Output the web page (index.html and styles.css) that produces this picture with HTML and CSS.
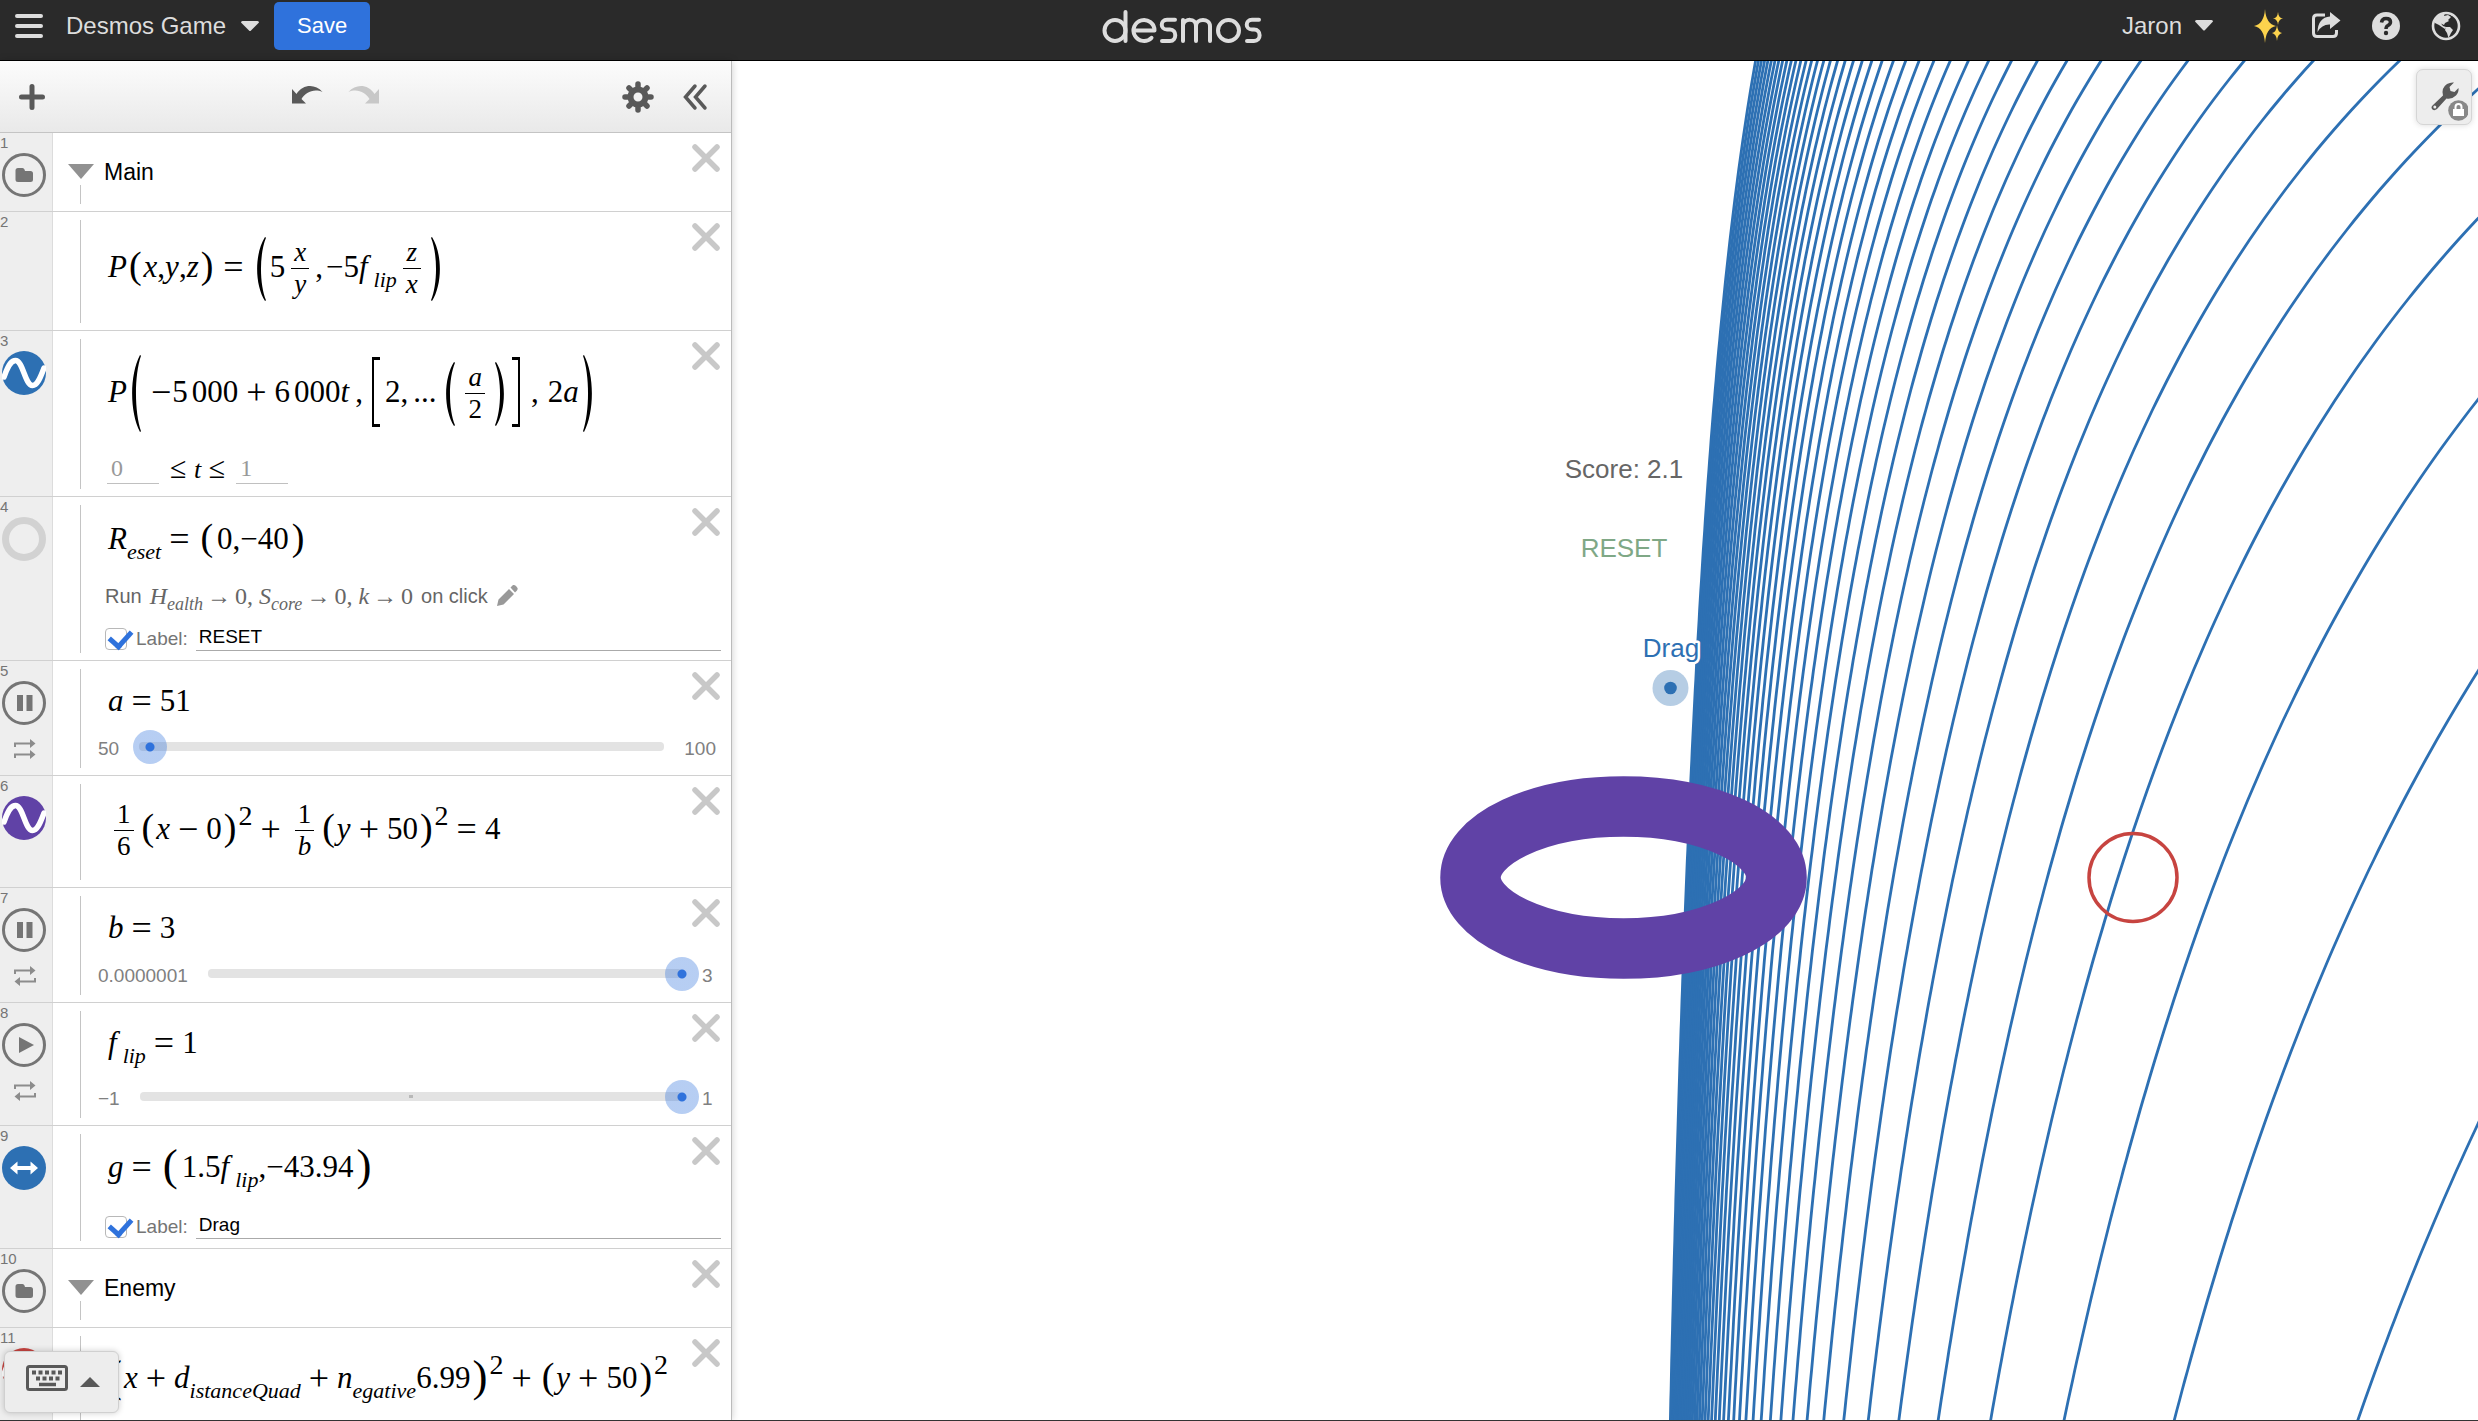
FILE: index.html
```html
<!DOCTYPE html>
<html lang="en">
<head>
<meta charset="utf-8">
<title>Desmos Game</title>
<link rel="stylesheet" href="styles.css">
</head>
<body>
<svg class="defs" aria-hidden="true">
  <symbol id="paren-open" viewBox="0 0 10 100" preserveAspectRatio="none"><path d="M9 0C-1.500 26-1.500 74 9 100L10 99C3.300 74 3.300 26 10 1Z"/></symbol>
  <symbol id="paren-close" viewBox="0 0 10 100" preserveAspectRatio="none"><path d="M1 0C11.500 26 11.500 74 1 100L0 99C6.700 74 6.700 26 0 1Z"/></symbol>
  <symbol id="close" viewBox="0 0 28 28"><path d="M3 3L25 25M25 3L3 25" stroke="currentColor" stroke-width="5.500" stroke-linecap="round"/></symbol>
  <symbol id="folder" viewBox="0 0 44 44"><circle cx="22" cy="22" r="20.500" fill="none" stroke="#757575" stroke-width="3"/><path d="M13.500 17.500q0-2.500 2.500-2.500h4.500q1.500 0 2 1.500l.5 1.500h5.500q2.500 0 2.500 2.500v6q0 2.500-2.500 2.500h-12.500q-2.500 0-2.500-2.500z" fill="#757575"/></symbol>
  <symbol id="pause" viewBox="0 0 44 44"><circle cx="22" cy="22" r="20.500" fill="none" stroke="#757575" stroke-width="3"/><path d="M15 14h6v16h-6zM24.500 14h6v16h-6z" fill="#757575"/></symbol>
  <symbol id="play" viewBox="0 0 44 44"><circle cx="22" cy="22" r="20.500" fill="none" stroke="#757575" stroke-width="3"/><path d="M17 14L32 22L17 30Z" fill="#757575"/></symbol>
  <symbol id="wave" viewBox="0 0 44 44"><circle cx="22" cy="22" r="22" fill="currentColor"/><path d="M2 26C7 12 10 9.500 13.500 9.500C21 9.500 23 34.500 30.500 34.500C35 34.500 38 28 42 17" fill="none" stroke="#fff" stroke-width="5.500" stroke-linecap="round"/></symbol>
  <symbol id="loop" viewBox="0 0 22 22"><path d="M1 9V5.500H17M21 13V16.500H5" fill="none" stroke="#8c8c8c" stroke-width="2"/><path d="M16 1l5.500 4.500L16 10zM6 12L.5 16.500L6 21z" fill="#8c8c8c"/></symbol>
  <symbol id="forward" viewBox="0 0 22 22"><path d="M1 9V5.500H17M1 20V16.500H17" fill="none" stroke="#8c8c8c" stroke-width="2"/><path d="M16 1l5.500 4.500L16 10zM16 12l5.500 4.500L16 21z" fill="#8c8c8c"/></symbol>
  <symbol id="undo" viewBox="0 0 32 20"><path d="M1 4V18.500H15L10.500 14C14 7.500 23 3 31.500 7C24-1.500 12-1 5.500 9Z" fill="currentColor"/></symbol>
</svg>

<header class="topbar">
  <button class="bare" aria-label="Open graph menu"><svg width="28" height="26"><path d="M2 3h24M2 13h24M2 23h24" stroke="#ddd" stroke-width="4" stroke-linecap="round"/></svg></button>
  <button class="bare title">Desmos Game<svg width="18" height="10"><path d="M0 1.500Q0 0 1.500 0h15Q18 0 18 1.500L10 9.500Q9 10.500 8 9.500Z" fill="#ddd"/></svg></button>
  <button class="save">Save</button>
  <a class="logo" href="#" aria-label="desmos"><svg width="164" height="36" viewBox="0 0 164 36" fill="none" stroke="#ddd" stroke-width="4" stroke-linecap="round" stroke-linejoin="round">
    <circle cx="15" cy="22.500" r="10.500"/><path d="M25.500 4V33M33.500 22.500H54.500M54.500 22.500A10.500 10.500 0 1 0 51.500 29.800M75 11.800H67C60 11.800 60 21.500 67 21.500H70C77 21.500 77 33 70 33H62M83 33V12M83 17C84.500 10 96 10 96 18V33M96 18C96 10 110 10 110 18V33M159 11.800H152C145 11.800 145 21.500 152 21.500H154C161.500 21.500 161.500 33 154 33H147"/><circle cx="128.500" cy="22.500" r="10.500"/>
  </svg></a>
  <nav class="account">
    <button class="bare user">Jaron<svg width="18" height="11"><path d="M0 1.500Q0 0 1.500 0h15Q18 0 18 1.500L10 10Q9 11 8 10Z" fill="#ddd"/></svg></button>
    <button class="bare" aria-label="What's new"><svg width="28" height="34" viewBox="0 0 28 34" fill="#fcd34d"><path d="M12 0Q13 15 23 17Q13 19 12 34Q11 19 1 17Q11 15 12 0Z"/><path d="M25 3Q25.500 9 30 9.500Q25.500 10 25 16Q24.500 10 20 9.500Q24.500 9 25 3ZM24 16Q24.500 23 29 24Q24.500 25 24 32Q23.500 25 19 24Q23.500 23 24 16Z"/></svg></button>
    <button class="bare" aria-label="Share"><svg width="30" height="28" viewBox="0 0 30 28"><path d="M14 3H6Q2.500 3 2.500 6.500V21Q2.500 24.500 6 24.500H22Q25.500 24.500 25.500 21V18" fill="none" stroke="#ddd" stroke-width="3"/><path d="M19 0L29.500 8.500L19 17V12.500Q11 12 6.500 20Q7 5.500 19 4.500Z" fill="#ddd"/></svg></button>
    <button class="bare" aria-label="Help"><svg width="30" height="30" viewBox="0 0 30 30"><circle cx="15" cy="15" r="14" fill="#ddd"/><path d="M10.500 11.500Q11 7.500 15 7.500Q19.500 7.500 19.500 11Q19.500 13 17 14.500Q15 15.500 15 18" fill="none" stroke="#2a2a2a" stroke-width="3.500"/><circle cx="15" cy="22" r="2.200" fill="#2a2a2a"/></svg></button>
    <button class="bare" aria-label="Language"><svg width="30" height="30" viewBox="0 0 30 30"><circle cx="15" cy="15" r="13" fill="none" stroke="#ddd" stroke-width="2.600"/><path d="M4 9L9 3L14 2L13 5L17 4L20 6L17 9L18 10L14 12L13 14L10 12.500L12 15L15 16L14 18L8 14L4 12ZM15 16L19 16L22 19L20 22L17.500 27L16 22L14 19ZM17 2L22 3L21 5Z" fill="#ddd"/></svg></button>
  </nav>
</header>

<div class="workspace">
  <main class="graph">
    <svg class="plane" viewBox="732 61 1746 1359" preserveAspectRatio="xMidYMid slice" role="img" aria-label="Graph">
      <g id="curves" fill="none" stroke="#2d70b3" stroke-width="2.800"></g>
      <ellipse cx="1623.500" cy="877.500" rx="153" ry="71" fill="none" stroke="#6042a6" stroke-width="60.500"/>
      <circle cx="2133" cy="877.500" r="44" fill="none" stroke="#c74440" stroke-width="3.500"/>
      <circle cx="1670.500" cy="688" r="18" fill="#2d70b3" fill-opacity=".35"/>
      <circle cx="1670.500" cy="688" r="6.300" fill="#2d70b3"/>
      <g class="labels">
        <text x="1624" y="478" fill="#666">Score: 2.1</text>
        <text x="1624" y="557" fill="#7fa886">RESET</text>
        <text x="1671" y="657" fill="#2d70b3">Drag</text>
      </g>
    </svg>
    <button class="settings" aria-label="Graph settings">
      <svg width="46" height="46" viewBox="0 0 46 46"><path d="M9.500 29.500L20 19.500Q18 12 24 8Q27.500 6 31 6.500L26.500 11L27.500 15L31.500 16L35.500 12Q36 16 33 19.500Q29 23.500 23.500 22.500L14 33Q11.500 35 9.500 33.500Q7.500 31.500 9.500 29.500Z" transform="translate(1 1)" fill="#595959"/><circle cx="12.800" cy="32" r="1.500" fill="#ededed"/><circle cx="36.500" cy="35.500" r="10.300" fill="#888"/><path d="M31 34h11v7H31z" fill="#fff"/><path d="M33.500 34v-2q0-3 3-3t3 3v2" fill="none" stroke="#fff" stroke-width="2"/></svg>
    </button>
  </main>

  <aside class="panel">
    <div class="toolbar">
      <button class="bare" aria-label="Add item"><svg width="26" height="26"><path d="M13 2.500v21M2.500 13h21" stroke="#595959" stroke-width="5" stroke-linecap="round"/></svg></button>
      <div class="history">
        <button class="bare" aria-label="Undo"><svg width="32" height="20"><use href="#undo"/></svg></button>
        <button class="bare redo" aria-label="Redo"><svg width="32" height="20"><use href="#undo" transform="matrix(-1 0 0 1 32 0)"/></svg></button>
      </div>
      <div class="tools">
        <button class="bare" aria-label="Edit list"><svg width="28" height="28" viewBox="-14 -14 28 28"><circle r="7.500" fill="none" stroke="#595959" stroke-width="6"/><path d="M0-13V-9M0 13V9M-13 0H-9M13 0H9M-9-9L-7-7M9 9L7 7M-9 9L-7 7M9-9L7-7" stroke="#595959" stroke-width="5.500" stroke-linecap="round"/></svg></button>
        <button class="bare" aria-label="Hide list"><svg width="24" height="26"><path d="M12 2L2.500 13L12 24M22 2L12.500 13L22 24" fill="none" stroke="#595959" stroke-width="3.500" stroke-linecap="round"/></svg></button>
      </div>
    </div>

    <div class="list">
      <section class="row folder">
        <div class="gutter"><span class="num">1</span><svg class="icon"><use href="#folder"/></svg></div>
        <div class="rail"><button class="bare fold" aria-label="Collapse folder"><svg width="26" height="15"><path d="M0 0H26L13 15Z" fill="#919191"/></svg></button></div>
        <div class="body">Main</div>
        <button class="bare delete" aria-label="Delete"><svg width="28" height="28"><use href="#close"/></svg></button>
      </section>

      <section class="row">
        <div class="gutter"><span class="num">2</span></div>
        <div class="rail"></div>
        <div class="body"><div class="math tall raised">
          <i>P</i><span class="p">(</span><i>x</i><span>,</span><i>y</i><span>,</span><i>z</i><span class="p">)</span><span class="op">=</span><svg class="delim"><use href="#paren-open"/></svg><span>5</span><span class="frac"><i>x</i><i>y</i></span><span class="comma">,</span><span>−5<i>f</i><sub class="after-f">lip</sub></span><span class="frac"><i>z</i><i>x</i></span><svg class="delim"><use href="#paren-close"/></svg>
        </div></div>
        <button class="bare delete" aria-label="Delete"><svg width="28" height="28"><use href="#close"/></svg></button>
      </section>

      <section class="row">
        <div class="gutter"><span class="num">3</span><svg class="icon blue"><use href="#wave"/></svg></div>
        <div class="rail"></div>
        <div class="body"><div class="math taller">
          <i>P</i><svg class="delim x-large"><use href="#paren-open"/></svg><span class="op sign">−</span><span class="group">5</span><span>000</span><span class="op">+</span><span class="group">6</span><span>000<i>t</i></span><span class="sep">,</span><span class="bracket left"></span><span>2,</span><span class="dots">...</span><svg class="delim"><use href="#paren-open"/></svg><span class="frac"><i>a</i><span>2</span></span><svg class="delim"><use href="#paren-close"/></svg><span class="bracket right"></span><span class="sep">,</span><span>2<i>a</i></span><svg class="delim x-large"><use href="#paren-close"/></svg>
        </div>
        <div class="bounds"><input type="text" value="0" aria-label="Lower bound of t"><span class="relation">≤ <i>t</i> ≤</span><input type="text" value="1" aria-label="Upper bound of t"></div></div>
        <button class="bare delete" aria-label="Delete"><svg width="28" height="28"><use href="#close"/></svg></button>
      </section>

      <section class="row">
        <div class="gutter"><span class="num">4</span><svg class="icon" viewBox="0 0 44 44"><circle cx="22" cy="22" r="18.500" fill="#eee" stroke="#d2d2d2" stroke-width="7"/></svg></div>
        <div class="rail"></div>
        <div class="body"><div class="math point">
          <span><i>R</i><sub>eset</sub></span><span class="op">=</span><span class="p">(</span><span>0,</span><span>−40</span><span class="p">)</span>
        </div>
        <div class="action"><span>Run</span><span class="steps"><i>H</i><sub>ealth</sub><b>→</b>0, <i>S</i><sub>core</sub><b>→</b>0, <i>k</i><b>→</b>0</span><span>on click</span><button class="bare" aria-label="Edit action"><svg width="22" height="22"><path d="M1 21L2.500 14.500L13 4L18 9L7.500 19.500ZM14.500 2.500L17 0Q18.500-.5 20 1L21.500 3Q22 4 21 5.500L19 7.500Z" fill="#999"/></svg></button></div>
        <div class="caption"><input type="checkbox" checked aria-label="Show label"><label for="label-reset">Label:</label><input id="label-reset" type="text" value="RESET"></div></div>
        <button class="bare delete" aria-label="Delete"><svg width="28" height="28"><use href="#close"/></svg></button>
      </section>

      <section class="row">
        <div class="gutter"><span class="num">5</span><svg class="icon"><use href="#pause"/></svg><svg class="mode"><use href="#forward"/></svg></div>
        <div class="rail"></div>
        <div class="body"><div class="math short"><i>a</i><span class="op">=</span><span>51</span></div>
        <div class="slider"><span>50</span><div class="track"><input type="range" min="50" max="100" value="51" aria-label="a"></div><span class="max">100</span></div></div>
        <button class="bare delete" aria-label="Delete"><svg width="28" height="28"><use href="#close"/></svg></button>
      </section>

      <section class="row">
        <div class="gutter"><span class="num">6</span><svg class="icon purple"><use href="#wave"/></svg></div>
        <div class="rail"></div>
        <div class="body"><div class="math tall">
          <span class="frac"><span>1</span><span>6</span></span><span class="p">(</span><i>x</i><span class="op">−</span><span>0</span><span class="p">)</span><sup>2</sup><span class="op">+</span><span class="frac"><span>1</span><i>b</i></span><span class="p">(</span><i>y</i><span class="op">+</span><span>50</span><span class="p">)</span><sup>2</sup><span class="op">=</span><span>4</span>
        </div></div>
        <button class="bare delete" aria-label="Delete"><svg width="28" height="28"><use href="#close"/></svg></button>
      </section>

      <section class="row">
        <div class="gutter"><span class="num">7</span><svg class="icon"><use href="#pause"/></svg><svg class="mode"><use href="#loop"/></svg></div>
        <div class="rail"></div>
        <div class="body"><div class="math short"><i>b</i><span class="op">=</span><span>3</span></div>
        <div class="slider"><span>0.0000001</span><div class="track"><input type="range" min="0" max="3" value="3" aria-label="b"></div><span class="max">3</span></div></div>
        <button class="bare delete" aria-label="Delete"><svg width="28" height="28"><use href="#close"/></svg></button>
      </section>

      <section class="row">
        <div class="gutter"><span class="num">8</span><svg class="icon"><use href="#play"/></svg><svg class="mode"><use href="#loop"/></svg></div>
        <div class="rail"></div>
        <div class="body"><div class="math short deep"><span><i>f</i><sub class="after-f">lip</sub></span><span class="op">=</span><span>1</span></div>
        <div class="slider"><span>−1</span><div class="track tick"><input type="range" min="-1" max="1" value="1" aria-label="f lip"></div><span class="max">1</span></div></div>
        <button class="bare delete" aria-label="Delete"><svg width="28" height="28"><use href="#close"/></svg></button>
      </section>

      <section class="row">
        <div class="gutter"><span class="num">9</span><svg class="icon" viewBox="0 0 44 44"><circle cx="22" cy="22" r="22" fill="#2d70b3"/><path d="M14 22h16" stroke="#fff" stroke-width="4"/><path d="M8 22l7.500-6.500v13zM36 22l-7.500-6.500v13z" fill="#fff"/></svg></div>
        <div class="rail"></div>
        <div class="body"><div class="math deep point">
          <i>g</i><span class="op">=</span><span class="p big">(</span><span>1.5<i>f</i><sub class="after-f">lip</sub>,</span><span>−43.94</span><span class="p big">)</span>
        </div>
        <div class="caption"><input type="checkbox" checked aria-label="Show label"><label for="label-drag">Label:</label><input id="label-drag" type="text" value="Drag"></div></div>
        <button class="bare delete" aria-label="Delete"><svg width="28" height="28"><use href="#close"/></svg></button>
      </section>

      <section class="row folder">
        <div class="gutter"><span class="num">10</span><svg class="icon"><use href="#folder"/></svg></div>
        <div class="rail"><button class="bare fold" aria-label="Collapse folder"><svg width="26" height="15"><path d="M0 0H26L13 15Z" fill="#919191"/></svg></button></div>
        <div class="body">Enemy</div>
        <button class="bare delete" aria-label="Delete"><svg width="28" height="28"><use href="#close"/></svg></button>
      </section>

      <section class="row">
        <div class="gutter"><span class="num">11</span><svg class="icon red"><use href="#wave"/></svg></div>
        <div class="rail"></div>
        <div class="body"><div class="math long">
          <span class="p big">(</span><i>x</i><span class="op">+</span><span><i>d</i><sub>istanceQuad</sub></span><span class="op">+</span><span><i>n</i><sub>egative</sub>6.99</span><span class="p big">)</span><sup>2</sup><span class="op">+</span><span class="p">(</span><i>y</i><span class="op">+</span><span>50</span><span class="p">)</span><sup>2</sup>
        </div></div>
        <button class="bare delete" aria-label="Delete"><svg width="28" height="28"><use href="#close"/></svg></button>
      </section>
    </div>

    <button class="keypad" aria-label="Show keypad">
      <svg width="42" height="26" viewBox="0 0 42 26"><rect x="1.500" y="1.500" width="39" height="23" rx="2" fill="none" stroke="#595959" stroke-width="3"/><path d="M6 7.500h30" stroke="#595959" stroke-width="4" stroke-dasharray="4 2.500"/><path d="M10 13.500h24" stroke="#595959" stroke-width="4" stroke-dasharray="4 2.500"/><path d="M13 19.500h17" stroke="#595959" stroke-width="3.500"/></svg>
      <svg width="20" height="10"><path d="M0 10L10 0L20 10Z" fill="#595959"/></svg>
    </button>
  </aside>
</div>
<script src="script.js"></script>
</body>
</html>
```
FILE: styles.css
```css
* { box-sizing: border-box; }

body {
  margin: 0;
  height: 100vh;
  display: flex;
  flex-direction: column;
  overflow: hidden;
  border-bottom: 1px solid #333;
  background: #fff;
  color: #000;
  font-family: "Liberation Sans", Arial, sans-serif;
}

svg { display: block; flex: none; }
.defs { position: absolute; width: 0; height: 0; }

.bare {
  display: flex;
  align-items: center;
  padding: 0;
  border: 0;
  background: none;
  color: inherit;
  font: inherit;
  cursor: pointer;
}
.bare svg { overflow: visible; }

/* Top bar */
.topbar {
  flex: none;
  display: flex;
  align-items: center;
  height: 61px;
  padding: 0 17px 9px 15px;
  border-bottom: 1px solid #000;
  background: #2a2a2a;
  color: #ddd;
  font-size: 24px;
}
.title { gap: 15px; margin: 0 15px 0 23px; }
.save {
  width: 96px;
  height: 48px;
  border: 0;
  border-radius: 5px;
  background: #2f72dc;
  color: #fff;
  font: 22px "Liberation Sans", Arial, sans-serif;
}
.logo {
  flex: 1;
  display: flex;
  justify-content: center;
  padding-right: 128px;
}
.account { display: flex; align-items: center; gap: 30px; }
.user { gap: 13px; margin-right: 10px; }

/* Workspace */
.workspace { flex: 1; min-height: 0; display: flex; }
.graph { order: 2; flex: 1; min-width: 0; position: relative; }
.plane { width: 100%; height: 100%; }
.labels {
  font-size: 26px;
  text-anchor: middle;
  stroke: #fff;
  stroke-width: 5px;
  stroke-linejoin: round;
  paint-order: stroke;
}
.settings {
  position: absolute;
  top: 8px;
  right: 6px;
  display: flex;
  width: 56px;
  height: 56px;
  padding: 5px;
  border: 1px solid #d5d5d5;
  border-radius: 7px;
  background: #ededed;
  box-shadow: 0 0 6px rgba(0, 0, 0, .15);
}

.panel {
  position: relative;
  z-index: 1;
  width: 732px;
  display: flex;
  flex-direction: column;
  border-right: 1px solid #bbb;
  background: #fff;
  box-shadow: 0 0 8px rgba(0, 0, 0, .2);
}
.toolbar {
  flex: none;
  display: grid;
  grid-template-columns: 1fr auto 1fr;
  align-items: center;
  height: 72px;
  padding: 0 24px 0 19px;
  border-bottom: 1px solid #c4c4c4;
  background: linear-gradient(#fcfcfc, #e9e9e9);
  color: #595959;
}
.history { display: flex; gap: 25px; padding: 0 56px 4px 0; }
.redo { color: #c8c8c8; }
.tools { display: flex; justify-content: flex-end; gap: 31px; }

/* Expression list */
.list { flex: 1; min-height: 0; overflow: hidden; }
.row {
  position: relative;
  display: flex;
  border-bottom: 1px solid #d0d0d0;
}
.gutter {
  width: 53px;
  flex: none;
  border-right: 1px solid #dcdcdc;
  background: #eee;
}
.num {
  display: block;
  height: 20px;
  color: #757575;
  font-size: 15px;
  line-height: 20px;
}
.icon { width: 44px; height: 44px; margin-left: 2px; }
.mode { width: 22px; height: 22px; margin: 13px 0 0 14px; }
.blue { color: #2d70b3; }
.purple { color: #6042a6; }
.red { color: #c74440; }

.rail {
  width: 41px;
  flex: none;
  display: flex;
  flex-direction: column;
  padding: 8px 0 7px;
}
.rail::after {
  content: "";
  flex: 1;
  width: 1px;
  margin-left: 27px;
  background: #c4c4c4;
}
.folder .rail { padding-top: 31px; }
.fold { margin: 0 0 6px 15px; }
.body { flex: 1; min-width: 0; }
.folder .body { padding: 0 10px; font-size: 23px; line-height: 78px; }
.delete { position: absolute; top: 11px; right: 11px; color: #c8c8c8; }

/* Mathematics */
.math {
  display: flex;
  align-items: center;
  height: 84px;
  padding-left: 14px;
  font: 31px/36px "Liberation Serif", "Times New Roman", serif;
  white-space: nowrap;
}
.tall { height: 111px; padding-bottom: 6px; }
.raised { height: 118px; padding-bottom: 8px; }
.long { height: 100px; padding-left: 11px; }
.taller { height: 122px; }
.short { height: 69px; padding-top: 10px; }
.math.deep { height: 89px; padding-bottom: 7px; }
.short.deep { height: 77px; padding-bottom: 8px; }

.op { margin: 0 8px; font-size: 36px; }
.sign { margin: 0 1px 0 6px; }
.p { font-size: 38px; margin: 0 2px 4px; }
.big { font-size: 45px; margin-bottom: 5px; }
.point .p { margin-left: 3px; margin-right: 4px; }
.comma { margin-right: 3px; }
.sep { margin: 0 9px 0 6px; }
.dots { margin: 0 5px; }
.group { margin-right: 4px; }
sub, sup { font-size: 22px; line-height: 0; }
sub { font-style: italic; vertical-align: -10px; }
.after-f { margin-left: 6px; }
.math sup { margin: 0 0 26px; font-size: 28px; }
.delim { width: 10px; height: 64px; margin: 3px 4px 0; }
.x-large { height: 77px; }
.bracket {
  width: 8px;
  height: 70px;
  margin-right: 5px;
  border: solid #000;
  border-width: 3px 0 3px 2px;
}
.bracket.right { border-width: 3px 2px 3px 0; margin-left: 3px; }
.frac {
  display: flex;
  flex-direction: column;
  align-items: center;
  min-width: 18px;
  margin: 3px 6px 0;
  font-size: 27px;
  line-height: 26px;
}
.frac > :first-child { padding: 0 3px 3px; }
.frac > :last-child { padding: 2px 3px 1px; border-top: 1px solid #000; align-self: stretch; text-align: center; }

/* Parameter bounds */
.bounds {
  display: flex;
  align-items: center;
  gap: 11px;
  height: 43px;
  padding: 0 0 12px 13px;
  font: 24px/30px "Liberation Serif", "Times New Roman", serif;
}
.relation { font-size: 30px; }
.relation i { font-size: 26px; }
.bounds input {
  width: 52px;
  height: 31px;
  padding: 0 4px;
  border: 0;
  border-bottom: 1px solid #c0c0c0;
  background: none;
  color: #999;
  font: inherit;
}

/* Click action */
.action {
  display: flex;
  align-items: center;
  gap: 8px;
  height: 46px;
  padding: 0 0 16px 11px;
  color: #666;
  font-size: 20px;
}
.steps { font: 24px/28px "Liberation Serif", "Times New Roman", serif; }
.steps b { margin: 0 4px; font-weight: normal; }
.steps sub { font-size: 18px; vertical-align: -6px; }

/* Point label */
.caption {
  display: flex;
  align-items: center;
  height: 33px;
  padding: 0 10px 9px 11px;
  color: #757575;
  font-size: 19px;
}
.caption label { margin: 0 8px 0 9px; }
.caption [type="text"] {
  flex: 1;
  min-width: 0;
  height: 24px;
  padding: 0 3px 3px;
  border: 0;
  border-bottom: 1px solid #aaa;
  background: none;
  color: #000;
  font: inherit;
}
.caption [type="checkbox"] {
  appearance: none;
  width: 22px;
  height: 22px;
  margin: 0;
  border: 1px solid #b8b8b8;
  border-radius: 4px;
  background: #fff;
}
.caption [type="checkbox"]:checked::after {
  content: "";
  display: block;
  width: 10px;
  height: 17px;
  margin: -3px 0 0 7px;
  border: solid #2f72dc;
  border-width: 0 5px 5px 0;
  transform: rotate(42deg);
}

/* Sliders */
.slider {
  display: flex;
  align-items: center;
  gap: 20px;
  margin-bottom: 12px;
  height: 33px;
  padding: 0 15px 0 4px;
  color: #808080;
  font-size: 19px;
}
.slider > span { padding-top: 4px; }
.max { min-width: 14px; }
.track {
  flex: 1;
  display: flex;
  align-items: center;
  height: 9px;
  border-radius: 4px;
  background: #e3e3e3;
}
.tick { background: radial-gradient(circle, #b8b8b8 2px, #e3e3e3 2px); }
.track input {
  appearance: none;
  flex: 1;
  min-width: 0;
  height: 34px;
  margin: 0 -17px;
  background: none;
}
.track input::-webkit-slider-thumb {
  appearance: none;
  width: 34px;
  height: 34px;
  border-radius: 50%;
  background: radial-gradient(circle, #2f72dc 4px, rgba(47, 114, 220, .35) 5px);
}

/* Keypad toggle */
.keypad {
  position: absolute;
  left: 4px;
  bottom: 7px;
  display: flex;
  align-items: center;
  gap: 12px;
  width: 115px;
  height: 62px;
  padding: 0 0 8px 21px;
  border: 1px solid #d0d0d0;
  border-radius: 6px;
  background: #ededed;
  box-shadow: 0 0 6px rgba(0, 0, 0, .2);
}
.keypad svg:last-child { margin-top: 8px; }
```
FILE: script.js
```js
// Family of hyperbolas x = K / (n * y), measured from the graph origin.
const ORIGIN_X = 1623.5;
const ORIGIN_Y = -687;
const K = 4642000;
const group = document.getElementById("curves");

for (let n = 2; n <= 47; n++) {
  const points = [];
  for (let y = 40; y <= 1440; y += 10) {
    const x = ORIGIN_X + K / (n * (y - ORIGIN_Y));
    points.push(x.toFixed(1) + "," + y);
  }
  const line = document.createElementNS("http://www.w3.org/2000/svg", "polyline");
  line.setAttribute("points", points.join(" "));
  group.appendChild(line);
}
```
